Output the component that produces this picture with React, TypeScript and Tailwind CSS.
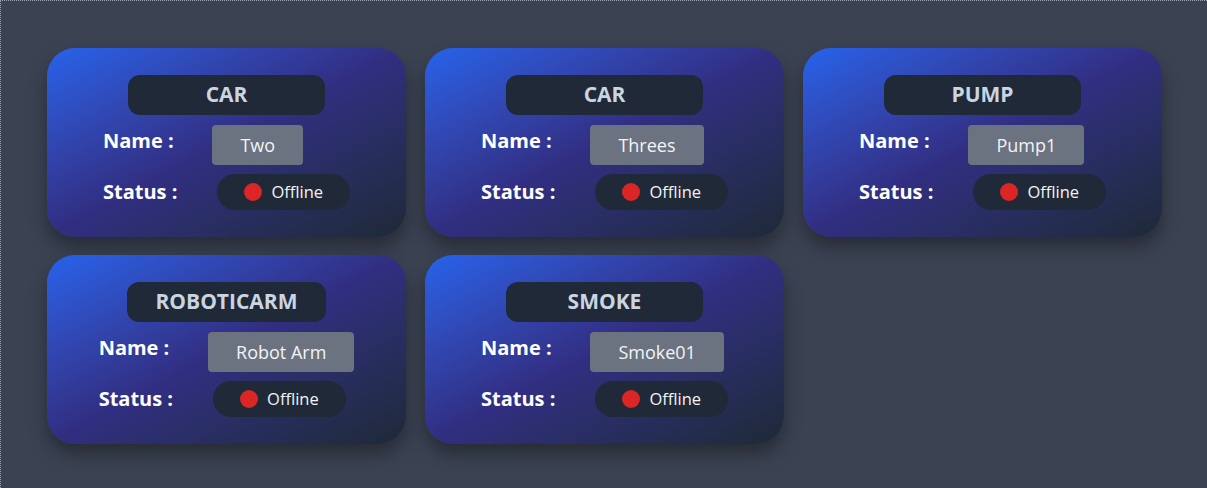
import React from 'react';

interface Device {
  type: string;
  name: string;
  online: boolean;
}

const devices: Device[] = [
  { type: 'CAR', name: 'Two', online: false },
  { type: 'CAR', name: 'Threes', online: false },
  { type: 'PUMP', name: 'Pump1', online: false },
  { type: 'ROBOTICARM', name: 'Robot Arm', online: false },
  { type: 'SMOKE', name: 'Smoke01', online: false },
];

function DeviceCard({ device }: { device: Device }) {
  return (
    <div className="w-[359px] h-[189px] rounded-[28px] bg-gradient-to-br from-[#2563eb] via-[#312e81] to-[#1f2937] shadow-[0_10px_18px_rgba(0,0,0,0.35)] flex flex-col items-center pt-[27px]">
      {/* Device type */}
      <div className="min-w-[197px] h-10 px-7 rounded-xl bg-[#1f2937] flex items-center justify-center">
        <span className="text-[21px] font-bold text-[#cbd5e1]">{device.type}</span>
      </div>

      {/* Details */}
      <div className="grid grid-cols-[auto_auto] gap-x-[35px] items-center mt-[10px]">
        <span className="text-[20px] font-bold text-white pb-2">Name :</span>
        <div className="h-10 px-7 rounded bg-[#6b7280] flex items-center justify-self-start">
          <span className="text-[18px] text-gray-100">{device.name}</span>
        </div>

        <span className="text-[20px] font-bold text-white mt-[9px]">Status :</span>
        <div className="h-9 mt-[9px] ml-[5px] px-[27px] rounded-full bg-[#1f2937] flex items-center gap-[9px] justify-self-start">
          <span className={`w-[18px] h-[18px] rounded-full ${device.online ? 'bg-green-500' : 'bg-[#dc2626]'}`}></span>
          <span className="text-[16.5px] text-gray-100">{device.online ? 'Online' : 'Offline'}</span>
        </div>
      </div>
    </div>
  );
}

export default function App() {
  return (
    <div
      className="w-[1207px] h-[488px] bg-[#3b4252] border-t border-l border-dotted border-[#9ca3af] pt-[47px] pl-[46px]"
      style={{ fontFamily: '"Open Sans", "Noto Sans", sans-serif' }}
    >
      <div className="flex flex-wrap gap-x-[19px] gap-y-[18px] w-[1120px]">
        {devices.map((d, i) => (
          <DeviceCard key={i} device={d} />
        ))}
      </div>
    </div>
  );
}
